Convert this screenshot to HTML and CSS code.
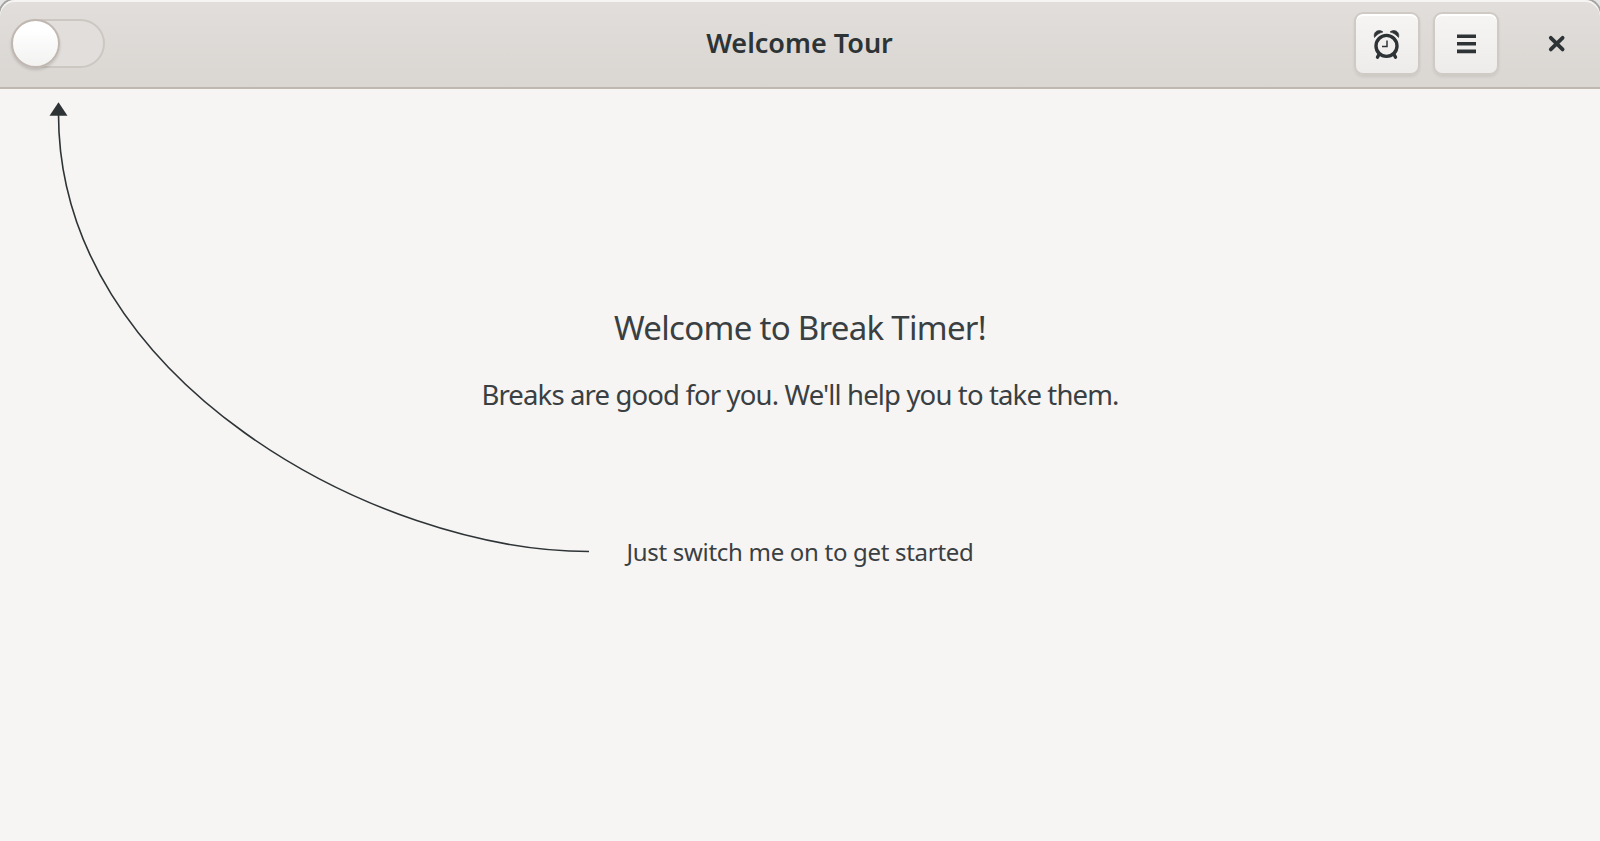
FILE: index.html
```
<!DOCTYPE html>
<html lang="en">
<head>
<meta charset="utf-8">
<title>Welcome Tour</title>
<link rel="stylesheet" href="styles.css">
</head>
<body>
<div class="window">
  <header class="headerbar">
    <div class="start"><div class="switch"><div class="knob"></div></div></div>
    <h1 class="title">Welcome Tour</h1>
    <div class="end">
      <button class="button" aria-label="Breaks">
        <svg width="32" height="32" viewBox="0 0 32 32" fill="none" stroke="#2e3436">
          <circle cx="15.500" cy="17.900" r="10.500" stroke-width="3.400"/>
          <path d="M3.500 9.500C2.300 5.500 4.900 2.600 8 2.500c1.600 0 3 .5 4 1.500C8.500 4.900 5.600 6.800 3.500 9.500zM27.500 9.500C28.700 5.500 26.100 2.600 23 2.500c-1.600 0-3 .5-4 1.500C22.500 4.900 25.400 6.800 27.500 9.500z" fill="#2e3436" stroke="#2e3436" stroke-width=".6"/>
          <path d="M8 26.500l-1.500 2.700M23 26.500l1.500 2.700" stroke-width="3.400" stroke-linecap="round"/>
          <path d="M16 12.500v6h-5" stroke-width="1.500"/>
        </svg>
      </button>
      <button class="button" aria-label="Menu">
        <svg width="32" height="32" viewBox="0 0 32 32" fill="#2e3436"><path d="M7 6.400h19v3.600H7zM7 14h19v3.600H7zM7 21.600h19v3.600H7z"/></svg>
      </button>
      <button class="close" aria-label="Close">
        <svg width="32" height="32" viewBox="0 0 32 32" fill="none" stroke="#2e3436" stroke-width="3.800" stroke-linecap="round"><path d="M10.800 9.800l11.800 11.600M22.600 9.800L10.800 21.400"/></svg>
      </button>
    </div>
  </header>
  <main class="content">
    <svg class="arrow" width="600" height="480" viewBox="0 88 600 480">
      <path d="M589 551.500C377 551.500 58.500 380 58.500 114" fill="none" stroke="#2e3436" stroke-width="1.600"/>
      <path d="M58.500 102.300L67.500 115.700H49.500z" fill="#2e3436"/>
    </svg>
    <h2 class="heading">Welcome to Break Timer!</h2>
    <p class="lead">Breaks are good for you. We'll help you to take them.</p>
    <p class="hint">Just switch me on to get started</p>
  </main>
</div>
</body>
</html>
```
FILE: styles.css
```
* { box-sizing: border-box; margin: 0; padding: 0; }
body { background: #e4e4e4; color: #2e3436; font-family: "Noto Sans", "Open Sans", sans-serif; }
.window { height: 841px; overflow: hidden; border-radius: 15px 15px 0 0; background: #f6f5f4; box-shadow: 0 0 0 2px #a5a5a3; }
.headerbar {
  height: 89px; padding: 0 12px 0 11px; display: grid; grid-template-columns: 1fr auto 1fr; align-items: center;
  border-bottom: 2px solid #bfb8b1; border-radius: 15px 15px 0 0;
  background: linear-gradient(to top, #dad6d2, #e1dedb); box-shadow: inset 0 2px #f6f5f4;
}
.switch { width: 94px; height: 49px; border: 2px solid #cdc7c2; border-radius: 25px; background: #e1dedb; }
.knob { width: 49px; height: 49px; margin: -2px; border: 2px solid #c0b8b0; border-radius: 50%; background: linear-gradient(to bottom, #fff 20%, #f2f2f1); box-shadow: 0 2px 3px rgba(0,0,0,.14); }
.title { padding-bottom: 2px; font-size: 27px; line-height: 40px; font-weight: 600; white-space: nowrap; }
.end { display: flex; justify-content: flex-end; align-items: center; }
.button, .close { width: 66px; height: 63px; display: flex; align-items: center; justify-content: center; border: 0; background: none; }
.button { margin-right: 13px; border: 2px solid #d0cac5; border-radius: 9px; background: linear-gradient(to top, #edecea, #f6f5f4); box-shadow: inset 0 2px #fff, 0 2px 3px rgba(0,0,0,.07); }
.close { margin: 0 -1px 0 11px; }
.content { height: 752px; padding-top: 215px; position: relative; text-align: center; white-space: nowrap; }
.arrow { position: absolute; left: 0; top: -1px; }
.heading { font-size: 33px; line-height: 48px; font-weight: 400; letter-spacing: -.7px; }
.lead { margin-top: 23px; font-size: 27.5px; line-height: 40px; letter-spacing: -.86px; }
.hint { margin-top: 119px; font-size: 24px; line-height: 36px; letter-spacing: -.3px; }
.heading, .lead, .hint { color: #3a4042; }
```
